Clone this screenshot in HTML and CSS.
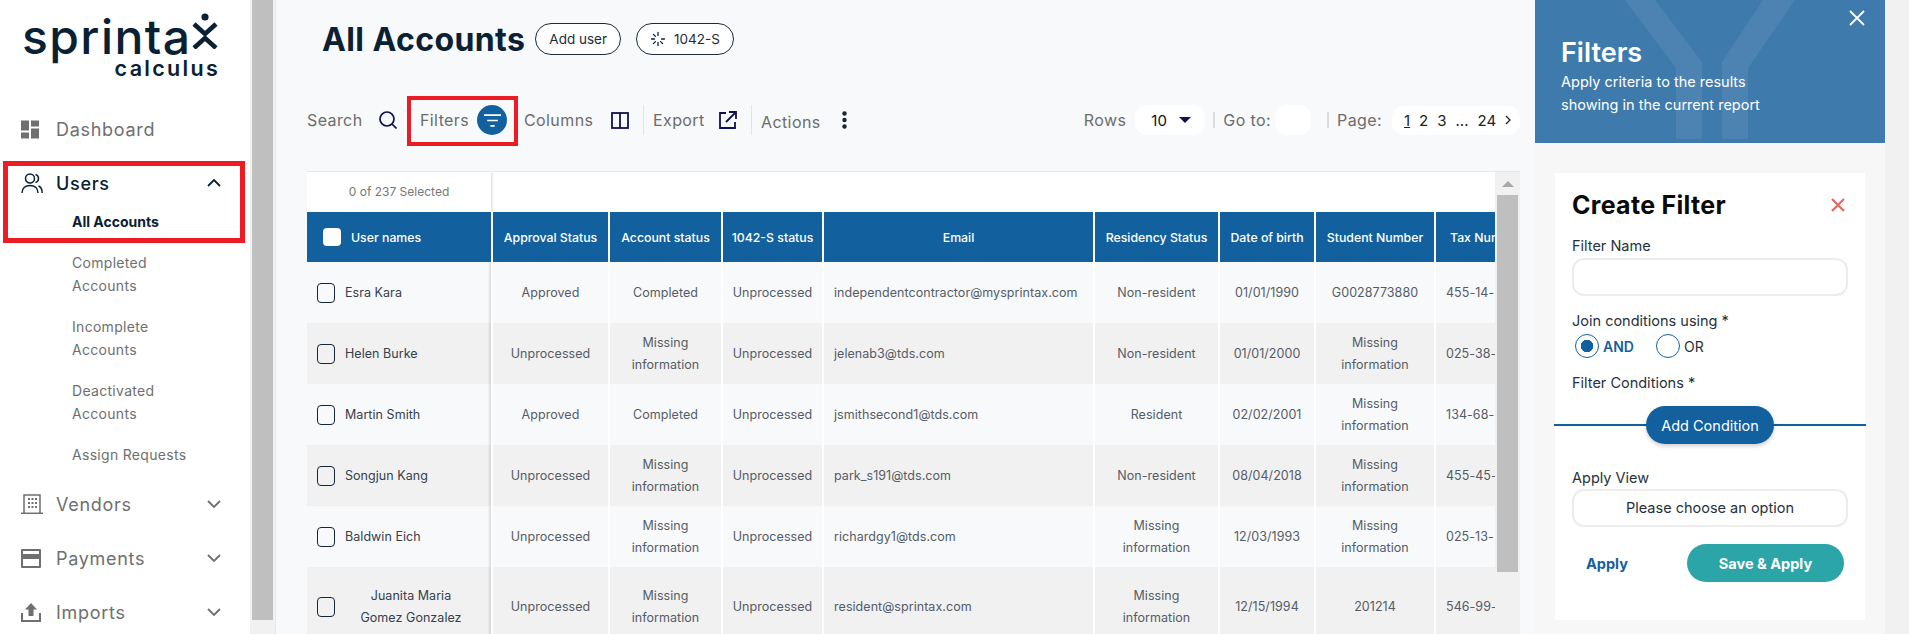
FILE: index.html
```html
<!DOCTYPE html>
<html lang="en">
<head>
    <meta charset="UTF-8">
    <meta name="viewport" content="width=device-width, initial-scale=1.0">
    <title>All Accounts</title>
    <link rel="stylesheet" href="styles.css">
</head>
<body>
    <div class="page">
        <aside class="sidebar">
            <div class="logo">
                <div class="logo-top">
                    <span class="logo-word">sprinta</span>
                    <svg class="logo-x" viewBox="0 0 26 36" width="26" height="36">
                        <circle cx="13" cy="4" r="3.6" fill="#0a2033"/>
                        <path d="M2 11 L13 21 L24 11" fill="none" stroke="#0a2033" stroke-width="4.6"/>
                        <path d="M2 35 L13 25 L24 35" fill="none" stroke="#0a2033" stroke-width="4.6"/>
                    </svg>
                </div>
                <div class="logo-sub">calculus</div>
            </div>

            <a class="nav-item">
                <svg class="nav-icon" viewBox="3 3 18 18" width="18" height="19"><path fill="#6f6f6f" d="M3 13h8V3H3v10zm0 8h8v-6H3v6zm10 0h8V11h-8v10zm0-18v6h8V3h-8z"/></svg>
                <span>Dashboard</span>
            </a>

            <div class="nav-group marked">
                <a class="nav-item active">
                    <svg class="nav-icon" viewBox="0 0 22 22" width="22" height="22" fill="none" stroke="#0a2033" stroke-width="1.5">
                        <circle cx="9" cy="6.5" r="4.5"/>
                        <path d="M1 21c0-5 3.500-7.500 8-7.500s8 2.500 8 7.500"/>
                        <path d="M14.500 2.500c2 .5 3 2.200 3 4s-1 3.500-3 4"/>
                        <path d="M17.500 14c2.500 1 3.700 3.500 3.700 7"/>
                    </svg>
                    <span>Users</span>
                    <svg class="chevron" viewBox="0 0 14 8" width="14" height="8"><path d="M1 7l6-6 6 6" fill="none" stroke="#0a2033" stroke-width="1.800"/></svg>
                </a>
                <a class="sub-item current">All Accounts</a>
            </div>
            <a class="sub-item">Completed Accounts</a>
            <a class="sub-item">Incomplete Accounts</a>
            <a class="sub-item">Deactivated Accounts</a>
            <a class="sub-item">Assign Requests</a>

            <a class="nav-item after-sub">
                <svg class="nav-icon" viewBox="0 0 22 20" width="22" height="20" fill="none" stroke="#6f6f6f" stroke-width="1.500">
                    <path d="M3 19V1h16v18"/>
                    <path d="M0 19.300h22"/>
                    <path d="M7 5h2M10.500 5h2M14 5h2M7 9h2M10.500 9h2M14 9h2M7 13h2M10.500 13h2M14 13h2" stroke-width="1.800"/>
                </svg>
                <span>Vendors</span>
                <svg class="chevron" viewBox="0 0 14 8" width="14" height="8"><path d="M1 1l6 6 6-6" fill="none" stroke="#6f6f6f" stroke-width="1.800"/></svg>
            </a>
            <a class="nav-item">
                <svg class="nav-icon" viewBox="0 0 20 19" width="20" height="19"><path fill="#6f6f6f" fill-rule="evenodd" d="M1 0h18a1 1 0 0 1 1 1v17a1 1 0 0 1-1 1H1a1 1 0 0 1-1-1V1a1 1 0 0 1 1-1zm1 2v3h16V2H2zm0 8v7h16v-7H2z"/></svg>
                <span>Payments</span>
                <svg class="chevron" viewBox="0 0 14 8" width="14" height="8"><path d="M1 1l6 6 6-6" fill="none" stroke="#6f6f6f" stroke-width="1.800"/></svg>
            </a>
            <a class="nav-item">
                <svg class="nav-icon" viewBox="0 0 20 19" width="20" height="19"><path fill="#6f6f6f" d="M10 0l6 6.500h-3.500V13h-5V6.500H4zM0 10h2v7h16v-7h2v9H0z"/></svg>
                <span>Imports</span>
                <svg class="chevron" viewBox="0 0 14 8" width="14" height="8"><path d="M1 1l6 6 6-6" fill="none" stroke="#6f6f6f" stroke-width="1.800"/></svg>
            </a>
        </aside>

        <div class="side-scroll"><div class="side-thumb"></div></div>

        <main class="main">
            <div class="title-row">
                <h1>All Accounts</h1>
                <button class="pill">Add user</button>
                <button class="pill pill-spin">
                    <svg viewBox="0 0 16 16" width="16" height="16" fill="none" stroke="#0a2033" stroke-width="1.300" stroke-linecap="round">
                        <path d="M8 1.500v3M8 11.500v3M1.500 8h3M11.500 8h3M3.400 3.400l2 2M10.600 10.600l2 2M3.400 12.600l2-2"/>
                    </svg>
                    1042-S
                </button>
            </div>

            <div class="toolbar">
                <span class="tool-label label-search">Search</span>
                <svg class="tool-icon" viewBox="0 0 18 18" width="18" height="18" fill="none" stroke="#11114e" stroke-width="1.700">
                    <circle cx="8" cy="8" r="7"/><path d="M13 13l4.500 4.500"/>
                </svg>
                <div class="tool-filters marked-filter">
                    <span class="tool-label">Filters</span>
                    <span class="filter-circle">
                        <svg viewBox="0 0 16 12" width="17" height="13" fill="none" stroke="#fff" stroke-width="1.600">
                            <path d="M0 1h16M3 6h10M6 11h4"/>
                        </svg>
                    </span>
                </div>
                <span class="tool-label label-columns">Columns</span>
                <svg class="tool-icon" viewBox="0 0 18 17" width="18" height="17" fill="none" stroke="#11114e" stroke-width="1.800">
                    <rect x="1" y="1" width="16" height="15"/><path d="M9 1v15"/>
                </svg>
                <span class="tool-div"></span>
                <span class="tool-label">Export</span>
                <svg class="tool-icon icon-export" viewBox="0 0 18 18" width="18" height="18" fill="none" stroke="#11114e" stroke-width="1.800">
                    <path d="M7 2H1v15h15v-6"/><path d="M7 11L16.500 1.500M10 1h7v7"/>
                </svg>
                <span class="tool-div"></span>
                <span class="tool-label label-actions">Actions</span>
                <svg class="tool-dots" viewBox="0 0 5 18" width="5" height="18"><circle cx="2.500" cy="2.500" r="2.200" fill="#1d2433"/><circle cx="2.500" cy="9" r="2.200" fill="#1d2433"/><circle cx="2.500" cy="15.500" r="2.200" fill="#1d2433"/></svg>

                <div class="pager">
                    <span class="tool-label">Rows</span>
                    <div class="rows-box"><span>10</span><i class="caret"></i></div>
                    <span class="pager-div first"></span>
                    <span class="tool-label">Go to:</span>
                    <div class="goto-box"></div>
                    <span class="pager-div"></span>
                    <span class="tool-label">Page:</span>
                    <div class="page-box">
                        <u>1</u><span>2</span><span>3</span><span>...</span><span>24</span>
                        <svg viewBox="0 0 6 10" width="6" height="10"><path d="M1 1l4 4-4 4" fill="none" stroke="#222" stroke-width="1.300"/></svg>
                    </div>
                </div>
            </div>

            <div class="table-box">
                <div class="table-area">
                    <div class="selected-bar"><div class="selected-cell">0 of 237 Selected</div></div>
                    <table class="grid">
                        <colgroup>
                            <col class="c-name"><col class="c-appr"><col class="c-acct"><col class="c-1042"><col class="c-mail"><col class="c-res"><col class="c-dob"><col class="c-stu"><col class="c-tax">
                        </colgroup>
                        <thead>
                            <tr>
                                <th class="name-head"><div class="head-wrap"><span class="head-check"></span>User names</div></th>
                                <th>Approval Status</th>
                                <th>Account status</th>
                                <th>1042-S status</th>
                                <th>Email</th>
                                <th>Residency Status</th>
                                <th>Date of birth</th>
                                <th>Student Number</th>
                                <th class="left">Tax Number</th>
                            </tr>
                        </thead>
                        <tbody>
                            <tr>
                                <td class="name"><div class="name-wrap"><span class="check"></span><span>Esra Kara</span></div></td>
                                <td>Approved</td><td>Completed</td><td>Unprocessed</td>
                                <td class="left">independentcontractor@mysprintax.com</td>
                                <td>Non-resident</td><td>01/01/1990</td><td>G0028773880</td><td class="left">455-14-</td>
                            </tr>
                            <tr>
                                <td class="name"><div class="name-wrap"><span class="check"></span><span>Helen Burke</span></div></td>
                                <td>Unprocessed</td><td>Missing<br>information</td><td>Unprocessed</td>
                                <td class="left">jelenab3@tds.com</td>
                                <td>Non-resident</td><td>01/01/2000</td><td>Missing<br>information</td><td class="left">025-38-</td>
                            </tr>
                            <tr>
                                <td class="name"><div class="name-wrap"><span class="check"></span><span>Martin Smith</span></div></td>
                                <td>Approved</td><td>Completed</td><td>Unprocessed</td>
                                <td class="left">jsmithsecond1@tds.com</td>
                                <td>Resident</td><td>02/02/2001</td><td>Missing<br>information</td><td class="left">134-68-</td>
                            </tr>
                            <tr>
                                <td class="name"><div class="name-wrap"><span class="check"></span><span>Songjun Kang</span></div></td>
                                <td>Unprocessed</td><td>Missing<br>information</td><td>Unprocessed</td>
                                <td class="left">park_s191@tds.com</td>
                                <td>Non-resident</td><td>08/04/2018</td><td>Missing<br>information</td><td class="left">455-45-</td>
                            </tr>
                            <tr>
                                <td class="name"><div class="name-wrap"><span class="check"></span><span>Baldwin Eich</span></div></td>
                                <td>Unprocessed</td><td>Missing<br>information</td><td>Unprocessed</td>
                                <td class="left">richardgy1@tds.com</td>
                                <td>Missing<br>information</td><td>12/03/1993</td><td>Missing<br>information</td><td class="left">025-13-</td>
                            </tr>
                            <tr class="tall">
                                <td class="name"><div class="name-wrap"><span class="check"></span><span class="name-two">Juanita Maria<br>Gomez Gonzalez</span></div></td>
                                <td>Unprocessed</td><td>Missing<br>information</td><td>Unprocessed</td>
                                <td class="left">resident@sprintax.com</td>
                                <td>Missing<br>information</td><td>12/15/1994</td><td>201214</td><td class="left">546-99-</td>
                            </tr>
                        </tbody>
                    </table>
                </div>
                <div class="table-scroll">
                    <i class="scroll-up"></i>
                    <div class="table-thumb"></div>
                </div>
            </div>
        </main>

        <section class="panel">
            <header class="panel-head">
                <svg class="panel-mark" viewBox="0 0 350 143" width="350" height="143">
                    <path fill="#fff" fill-opacity="0.07" d="M90 0h30l47 62v77h-26V68zM228 0h32l-47 68v71h-26V62z"/>
                </svg>
                <svg class="panel-close" viewBox="0 0 16 16" width="16" height="16"><path d="M1 1l14 14M15 1L1 15" stroke="#fff" stroke-width="1.800" fill="none"/></svg>
                <h2>Filters</h2>
                <p>Apply criteria to the results<br>showing in the current report</p>
            </header>
            <div class="panel-body">
                <form class="filter-card">
                    <div class="card-title">
                        <h3>Create Filter</h3>
                        <svg viewBox="0 0 14 14" width="14" height="14"><path d="M1 1l12 12M13 1L1 13" stroke="#e8665c" stroke-width="2.200" fill="none"/></svg>
                    </div>
                    <label class="field-label name-label">Filter Name</label>
                    <div class="text-input"></div>
                    <label class="field-label join-label">Join conditions using *</label>
                    <div class="radios">
                        <span class="radio on"></span><b>AND</b>
                        <span class="radio"></span><span>OR</span>
                    </div>
                    <label class="field-label cond-label">Filter Conditions *</label>
                    <div class="add-row"><button type="button" class="add-btn">Add Condition</button></div>
                    <label class="field-label view-label">Apply View</label>
                    <div class="text-input select-input">Please choose an option</div>
                    <div class="card-actions">
                        <a class="apply-link">Apply</a>
                        <button type="button" class="save-btn">Save &amp; Apply</button>
                    </div>
                </form>
            </div>
        </section>

        <div class="page-scroll"></div>
    </div>
</body>
</html>
```
FILE: styles.css
```css
*, *::after {
    box-sizing: border-box;
}
html, body {
    margin: 0;
    height: 100%;
    overflow: hidden;
}
body {
    font-family: Inter, "Open Sans", sans-serif;
    color: #0a2033;
    background: #f8f9fb;
}
button {
    font-family: inherit;
}
.page {
    display: flex;
    height: 634px;
    overflow: hidden;
}

/* sidebar */
.sidebar {
    width: 250px;
    flex: none;
    background: white;
}
.logo {
    height: 102px;
    padding: 13px 0 0 22px;
    width: 220px;
}
.logo-top {
    display: flex;
    align-items: flex-start;
    height: 47px;
}
.logo-word {
    font-size: 48px;
    line-height: 47px;
    font-weight: 500;
    letter-spacing: 1.4px;
    color: #0a2033;
}
.logo-x {
    margin: 0 0 0 1px;
    flex: none;
}
.logo-sub {
    font-size: 21.500px;
    line-height: 16px;
    font-weight: 600;
    letter-spacing: 2.300px;
    text-align: right;
    color: #0a2033;
}
.nav-item {
    display: flex;
    align-items: center;
    height: 54px;
    padding-left: 21px;
    font-size: 18px;
    letter-spacing: 0.7px;
    color: #6f6f6f;
    position: relative;
}
.nav-icon {
    flex: none;
}
.nav-item span {
    position: absolute;
    left: 56px;
}
.nav-item.active {
    color: #0a2033;
    font-weight: 500;
}
.nav-item.after-sub {
    margin-top: 11px;
}
.chevron {
    position: absolute;
    left: 207px;
    top: 23px;
}
.sub-item {
    display: block;
    width: 150px;
    margin: 18px 0 0 72px;
    font-size: 14px;
    line-height: 23px;
    color: #6f6f6f;
    letter-spacing: 0.3px;
    padding-right: 30px;
}
.sub-item.current {
    margin-top: 0;
    width: 160px;
    padding-right: 0;
    font-weight: 700;
    color: #0a2033;
    letter-spacing: 0;
}
.marked {
    position: relative;
}
.marked::after {
    content: "";
    position: absolute;
    left: 3px;
    top: 5px;
    width: 242px;
    height: 82px;
    border: 5px solid #ed1c24;
}
.side-scroll {
    width: 26px;
    flex: none;
    background: #f1f1f1;
    border-right: 1px solid #e6e6e6;
    padding-left: 2px;
}
.side-thumb {
    width: 21px;
    height: 620px;
    background: #bfbfbf;
}

/* main column */
.main {
    flex: 1;
    min-width: 0;
    padding: 23px 15px 0 31px;
}
.title-row {
    display: flex;
    align-items: center;
    height: 32px;
    padding-left: 15px;
}
h1 {
    margin: 0 10px 0 0;
    font-size: 32px;
    font-weight: 700;
    letter-spacing: 0.4px;
    white-space: nowrap;
    color: #0a2033;
}
.pill {
    display: inline-flex;
    align-items: center;
    gap: 8px;
    height: 32px;
    padding: 0 13px;
    border: 1px solid #1c2c3c;
    border-radius: 16px;
    background: white;
    font-size: 13.500px;
    color: #1c2c3c;
    margin-right: 15px;
}
.toolbar {
    display: flex;
    align-items: center;
    height: 30px;
    margin-top: 50px;
}
.toolbar > * {
    flex: none;
}
.tool-label {
    font-size: 16px;
    letter-spacing: 0.4px;
    color: #6c6c6c;
    white-space: nowrap;
}
.label-search {
    width: 72px;
}
.tool-filters {
    display: flex;
    align-items: center;
    margin-left: 23px;
    gap: 11px;
    position: relative;
}
.tool-filters .tool-label {
    width: 46px;
}
.marked-filter::after {
    content: "";
    position: absolute;
    left: -13px;
    top: -9px;
    width: 111px;
    height: 50px;
    border: 4px solid #ed1c24;
}
.filter-circle {
    width: 30px;
    height: 30px;
    border-radius: 50%;
    background: #13609f;
    display: flex;
    align-items: center;
    justify-content: center;
}
.label-columns {
    width: 87px;
    margin-left: 17px;
}
.tool-div {
    width: 1px;
    height: 30px;
    background: #e3e3e3;
    margin: 0 9px 0 14px;
}
.tool-div + .tool-label {
    width: 66px;
}
.tool-div + .label-actions {
    width: 81px;
    position: relative;
    top: 2px;
}
.pager {
    margin-left: auto;
    display: flex;
    align-items: center;
}
.rows-box {
    width: 70px;
    height: 30px;
    margin-left: 9px;
    background: white;
    border-radius: 12px;
    display: flex;
    align-items: center;
    padding-left: 16px;
    font-size: 15px;
    color: #111;
}
.caret {
    margin-left: 12px;
    border-left: 6px solid transparent;
    border-right: 6px solid transparent;
    border-top: 6px solid #11114e;
}
.pager-div {
    width: 2px;
    height: 16px;
    background: #dcdcdc;
    margin: 0 8px 0 11px;
}
.pager-div.first {
    margin-left: 8px;
}
.goto-box {
    width: 36px;
    height: 30px;
    margin-left: 4px;
    background: white;
    border-radius: 12px;
    margin-right: 5px;
}
.page-box {
    width: 128px;
    height: 29px;
    margin-left: 10px;
    background: white;
    border-radius: 12px;
    display: flex;
    align-items: center;
    gap: 9px;
    padding-left: 12px;
    font-size: 15px;
    color: #222;
}

/* table */
.table-box {
    display: flex;
    height: 463px;
    margin-top: 36px;
    border-top: 1px solid #e8e8e8;
    background: white;
}
.table-area {
    flex: 1;
    min-width: 0;
    overflow: hidden;
}
.selected-bar {
    height: 40px;
}
.selected-cell {
    width: 184px;
    height: 40px;
    background: white;
    box-shadow: 0 0 3px rgba(0,0,0,0.3);
    font-size: 12px;
    line-height: 40px;
    text-align: center;
    color: #777;
}
.grid {
    border-collapse: separate;
    border-spacing: 0;
    table-layout: fixed;
    width: 1250px;
    font-size: 12.500px;
    letter-spacing: 0.05px;
    color: #555c66;
}
.c-name { width: 186px; }
.c-appr { width: 117px; }
.c-acct { width: 113px; }
.c-1042 { width: 101px; }
.c-mail { width: 271px; }
.c-res { width: 125px; }
.c-dob { width: 96px; }
.c-stu { width: 120px; }
.c-tax { width: 121px; }
.grid th {
    height: 50px;
    background: #13609f;
    color: white;
    font-size: 12.300px;
    letter-spacing: 0;
    font-weight: 500;
    text-align: center;
    padding: 0;
    border-right: 2px solid white;
    white-space: nowrap;
}
.grid td {
    height: 61px;
    padding: 0;
    text-align: center;
    line-height: 22px;
    background: #f8f9fb;
    border-right: 2px solid white;
}
.grid tbody tr:nth-child(even) td {
    background: #f1f1f1;
}
.grid tr.tall td {
    height: 80px;
}
.grid th.left, .grid td.left {
    text-align: left;
    padding-left: 10px;
}
.grid th.left {
    padding-left: 14px;
}
.grid th.name-head {
    text-align: left;
    padding-left: 16px;
}
.head-wrap {
    display: flex;
    align-items: center;
    gap: 10px;
}
.head-check {
    flex: none;
    width: 18px;
    height: 18px;
    background: white;
    border-radius: 4px;
}
.grid td.name {
    box-shadow: inset -3px 0 2px -1px rgba(0,0,0,0.1);
    color: #34404e;
}
.name-wrap {
    display: flex;
    align-items: center;
    padding-left: 10px;
    gap: 10px;
    text-align: left;
}
.name-two {
    flex: 1;
    text-align: center;
    padding-right: 14px;
}
.check {
    flex: none;
    width: 18px;
    height: 20px;
    border: 1.500px solid #13263a;
    border-radius: 4px;
}
.table-scroll {
    width: 25px;
    flex: none;
    background: #f1f1f1;
    padding: 9px 2px 0;
}
.scroll-up {
    display: block;
    margin: 0 auto 8px;
    width: 0;
    border-left: 6px solid transparent;
    border-right: 6px solid transparent;
    border-bottom: 6px solid #a9a9a9;
}
.table-thumb {
    width: 21px;
    height: 377px;
    background: #bfbfbf;
}

/* filter panel */
.panel {
    width: 350px;
    flex: none;
    background: #f7f7f7;
}
.panel-head {
    position: relative;
    height: 143px;
    padding: 35px 26px 0;
    background: #3f7aad;
    color: white;
}
.panel-mark {
    position: absolute;
    left: 0;
    top: 0;
}
.panel-close {
    position: absolute;
    right: 20px;
    top: 10px;
}
.panel-head h2, .panel-head p {
    position: relative;
    margin: 0;
}
.panel-head h2 {
    font-size: 27px;
    line-height: 36px;
    font-weight: 600;
}
.panel-head p {
    font-size: 14.500px;
    line-height: 23px;
    margin-top: -1px;
}
.panel-body {
    padding: 30px 20px 0;
}
.filter-card {
    height: 447px;
    padding: 16px 17px 0;
    background: white;
    font-size: 14px;
}
.card-title {
    display: flex;
    align-items: center;
    justify-content: space-between;
    height: 32px;
    padding-right: 3px;
}
.card-title h3 {
    margin: 0;
    font-size: 25px;
    font-weight: 700;
    letter-spacing: 0.3px;
    color: #0a0a0a;
}
.field-label {
    display: block;
    margin-top: 9px;
    line-height: 22px;
    font-size: 14.500px;
    color: #26313c;
}
.name-label {
    margin-top: 14px;
}
.text-input {
    height: 38px;
    margin-top: 1px;
    border: 2px solid #ececec;
    border-radius: 12px;
    background: white;
}
.select-input {
    line-height: 34px;
    text-align: center;
    font-size: 14.500px;
    color: #26313c;
    margin-top: 0;
}
.join-label {
    margin-top: 14px;
}
.radios {
    display: flex;
    align-items: center;
    height: 24px;
    margin-top: 2px;
    padding-left: 3px;
    font-size: 14px;
    color: #26313c;
}
.radios b {
    color: #13609f;
    font-weight: 600;
    width: 53px;
    margin-left: 4px;
}
.radios span:last-child {
    margin-left: 4px;
}
.radio {
    width: 24px;
    height: 24px;
    flex: none;
    border-radius: 50%;
    border: 1.500px solid #13609f;
    background: white;
}
.radio.on {
    background: radial-gradient(circle, #13609f 0, #13609f 6px, white 6.500px);
}
.cond-label {
    margin-top: 14px;
}
.add-row {
    margin: 12px -18px 0;
    height: 38px;
    display: flex;
    justify-content: center;
    background: linear-gradient(#13609f, #13609f) center / 100% 2px no-repeat;
}
.add-btn {
    width: 128px;
    height: 38px;
    border: 0;
    border-radius: 19px;
    background: #13609f;
    color: white;
    font-size: 14.500px;
    box-shadow: 0 2px 4px rgba(0,0,0,0.2);
}
.view-label {
    margin-top: 23px;
}
.card-actions {
    display: flex;
    align-items: center;
    justify-content: space-between;
    margin-top: 17px;
    padding: 0 4px 0 14px;
}
.apply-link {
    color: #13609f;
    font-weight: 700;
    font-size: 14.500px;
}
.save-btn {
    width: 157px;
    height: 38px;
    border: 0;
    border-radius: 19px;
    background: #2ca5a8;
    color: white;
    font-weight: 700;
    font-size: 14.500px;
}
.page-scroll {
    width: 24px;
    flex: none;
    background: #f1f1f1;
}
```
